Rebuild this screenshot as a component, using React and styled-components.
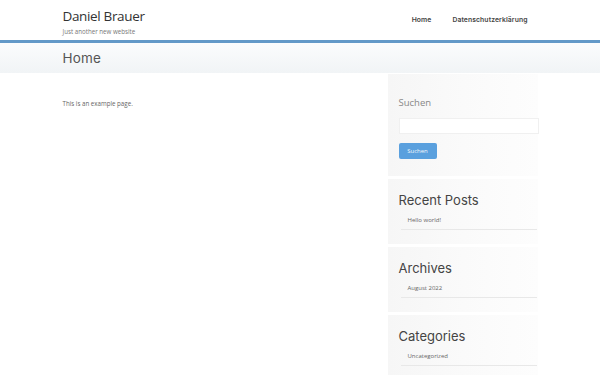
import styled, { createGlobalStyle } from "styled-components";

const GlobalStyle = createGlobalStyle`
  body {
    margin: 0;
    background: #fff;
    font-family: "Open Sans", "DejaVu Sans", sans-serif;
    color: #555;
  }
  * { box-sizing: border-box; }
`;

const widgets = [
  { title: "Recent Posts", item: "Hello world!" },
  { title: "Archives", item: "August 2022" },
  { title: "Categories", item: "Uncategorized" },
];

const App = () => {
  return (
    <>
      <GlobalStyle />
      <Header>
        <Container>
          <Branding>
            <SiteTitle>Daniel Brauer</SiteTitle>
            <Tagline>Just another new website</Tagline>
          </Branding>
          <Nav>
            <NavLink>Home</NavLink>
            <NavLink>Datenschutzerklärung</NavLink>
          </Nav>
        </Container>
      </Header>
      <TitleBand>
        <Container>
          <PageTitle>Home</PageTitle>
        </Container>
      </TitleBand>
      <Container>
        <Main>
          <Content>
            <Paragraph>This is an example page.</Paragraph>
          </Content>
          <Sidebar>
            <SearchWidget>
              <SearchTitle>Suchen</SearchTitle>
              <SearchInput type="text" />
              <SearchButton>Suchen</SearchButton>
            </SearchWidget>
            {widgets.map(({ title, item }) => (
              <Widget key={title}>
                <WidgetTitle>{title}</WidgetTitle>
                <WidgetItem>{item}</WidgetItem>
              </Widget>
            ))}
          </Sidebar>
        </Main>
      </Container>
    </>
  );
};

export default App;

const Container = styled.div`
  width: 475px;
  margin: 0 auto;
  display: flex;
  align-items: center;
`;

const Header = styled.header`
  height: 43px;
  border-bottom: 3px solid #6399c8;
  ${Container} {
    height: 40px;
    justify-content: space-between;
  }
`;

const Branding = styled.div`
  display: flex;
  flex-direction: column;
  padding-top: 4px;
`;

const SiteTitle = styled.span`
  font-size: 13.5px;
  line-height: 18px;
  letter-spacing: -0.35px;
  color: #333;
`;

const Tagline = styled.span`
  font-size: 6.2px;
  line-height: 12px;
  margin-top: 1px;
  color: #777;
`;

const Nav = styled.nav`
  display: flex;
  column-gap: 21px;
  padding-right: 10px;
  margin-top: -1px;
`;

const NavLink = styled.span`
  font-family: Inter, "Noto Sans", sans-serif;
  font-size: 6.8px;
  font-weight: 600;
  letter-spacing: 0.1px;
  color: #444;
`;

const TitleBand = styled.div`
  height: 30px;
  background: linear-gradient(to bottom, #fbfcfd, #f1f4f6);
  ${Container} {
    height: 30px;
  }
`;

const PageTitle = styled.h1`
  margin: 0;
  font-family: Inter, "Noto Sans", sans-serif;
  font-size: 13.5px;
  font-weight: 400;
  color: #555;
  letter-spacing: 0.2px;
`;

const Main = styled.div`
  display: flex;
  width: 100%;
  align-items: flex-start;
`;

const Content = styled.main`
  flex: 1;
  padding-top: 26px;
`;

const Paragraph = styled.p`
  margin: 0;
  font-size: 6.2px;
  line-height: 10px;
  color: #666;
`;

const Sidebar = styled.aside`
  width: 150px;
  display: flex;
  flex-direction: column;
  row-gap: 3px;
  margin-top: 1px;
`;

const Panel = styled.section`
  background: linear-gradient(to right, #f6f6f6, #fafafa 50%, #fdfdfd);
  padding-left: 11px;
`;

const SearchWidget = styled(Panel)`
  display: flex;
  flex-direction: column;
  align-items: flex-start;
  padding-top: 22px;
  padding-bottom: 17px;
`;

const SearchTitle = styled.h2`
  margin: 0 0 9px;
  font-size: 9.5px;
  line-height: 13px;
  font-weight: 400;
  color: #888;
`;

const SearchInput = styled.input`
  width: 140px;
  height: 16px;
  margin: 0 -1px 9px 0;
  border: 1px solid #f0f0f0;
  background: #fff;
  outline: none;
`;

const SearchButton = styled.button`
  width: 38px;
  height: 16px;
  padding: 0;
  border: none;
  border-radius: 2px;
  background: #5aa0de;
  color: #f2f7fc;
  font-family: "Open Sans", sans-serif;
  font-size: 6px;
`;

const Widget = styled(Panel)`
  padding-top: 13px;
  padding-right: 1px;
  padding-bottom: 14px;
`;

const WidgetTitle = styled.h2`
  margin: 0 0 2px;
  font-family: Inter, "Noto Sans", sans-serif;
  font-size: 13px;
  line-height: 16px;
  font-weight: 400;
  color: #444;
`;

const WidgetItem = styled.div`
  margin-left: 2px;
  padding: 6px 0 5px 7px;
  font-size: 6px;
  line-height: 8px;
  color: #666;
  border-bottom: 1px solid #e8e8e8;
`;
